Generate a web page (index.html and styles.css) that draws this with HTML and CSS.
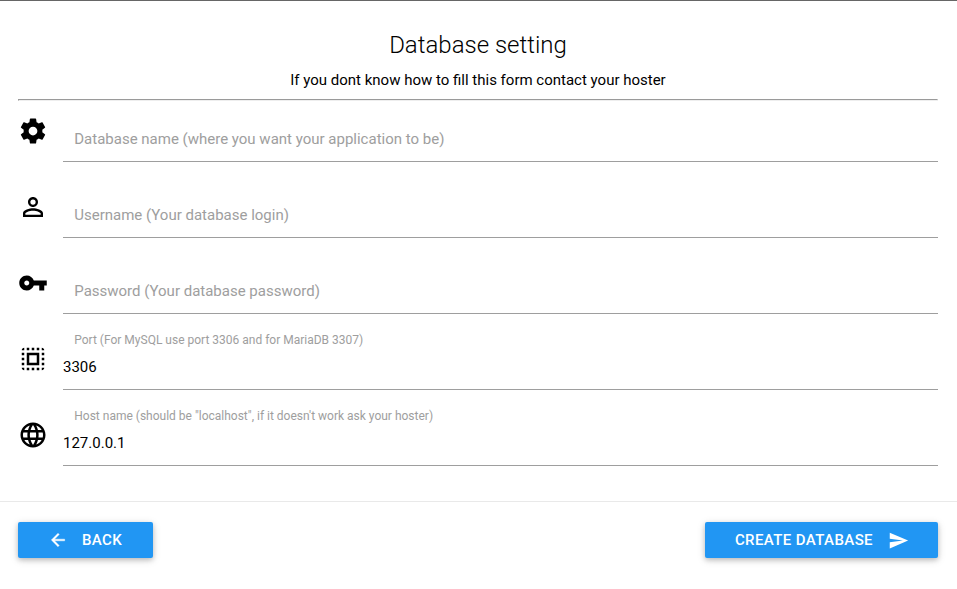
FILE: index.html
```html
<!DOCTYPE html>
<html lang="en">
<head>
  <meta charset="UTF-8">
  <meta name="viewport" content="width=device-width, initial-scale=1.0">
  <title>Database setting</title>
  <link rel="stylesheet" href="styles.css">
</head>
<body>
  <form class="setup">
    <div class="content">
      <header class="heading">
        <h1>Database setting</h1>
        <p>If you dont know how to fill this form contact your hoster</p>
      </header>
      <hr>

      <div class="input-field">
        <svg class="prefix" viewBox="0 0 24 24"><path d="M19.43 12.98c.04-.32.07-.64.07-.98s-.03-.66-.07-.98l2.11-1.65c.19-.15.24-.42.12-.64l-2-3.46c-.12-.22-.39-.3-.61-.22l-2.49 1c-.52-.4-1.08-.73-1.69-.98l-.38-2.65C14.46 2.18 14.25 2 14 2h-4c-.25 0-.46.18-.49.42l-.38 2.65c-.61.25-1.17.59-1.69.98l-2.49-1c-.23-.09-.49 0-.61.22l-2 3.46c-.13.22-.07.49.12.64l2.11 1.65c-.04.32-.07.65-.07.98s.03.66.07.98l-2.11 1.65c-.19.15-.24.42-.12.64l2 3.46c.12.22.39.3.61.22l2.49-1c.52.4 1.08.73 1.69.98l.38 2.65c.03.24.24.42.49.42h4c.25 0 .46-.18.49-.42l.38-2.65c.61-.25 1.17-.59 1.69-.98l2.49 1c.23.09.49 0 .61-.22l2-3.46c.12-.22.07-.49-.12-.64l-2.11-1.65zM12 15.5c-1.93 0-3.5-1.57-3.5-3.5s1.57-3.5 3.5-3.5 3.5 1.57 3.5 3.5-1.57 3.5-3.5 3.5z"/></svg>
        <div class="control">
          <label for="db-name">Database name (where you want your application to be)</label>
          <input id="db-name" type="text">
        </div>
      </div>

      <div class="input-field">
        <svg class="prefix" viewBox="0 0 24 24"><path d="M12 5.9a2.1 2.1 0 1 1 0 4.2 2.1 2.1 0 0 1 0-4.2m0 9c2.97 0 6.1 1.46 6.1 2.1v1.1H5.9V17c0-.64 3.13-2.1 6.1-2.1M12 4C9.79 4 8 5.79 8 8s1.79 4 4 4 4-1.79 4-4-1.79-4-4-4zm0 9c-2.67 0-8 1.34-8 4v3h16v-3c0-2.66-5.33-4-8-4z"/></svg>
        <div class="control">
          <label for="db-user">Username (Your database login)</label>
          <input id="db-user" type="text">
        </div>
      </div>

      <div class="input-field">
        <svg class="prefix" viewBox="0 0 24 24"><path d="M12.65 10C11.83 7.67 9.61 6 7 6c-3.31 0-6 2.69-6 6s2.69 6 6 6c2.61 0 4.83-1.67 5.65-4H17v4h4v-4h2v-4H12.65zM7 14c-1.1 0-2-.9-2-2s.9-2 2-2 2 .9 2 2-.9 2-2 2z"/></svg>
        <div class="control">
          <label for="db-password">Password (Your database password)</label>
          <input id="db-password" type="password">
        </div>
      </div>

      <div class="input-field">
        <svg class="prefix" viewBox="0 0 24 24"><path d="M3 5h2V3c-1.1 0-2 .9-2 2zm0 8h2v-2H3v2zm4 8h2v-2H7v2zM3 9h2V7H3v2zm10-6h-2v2h2V3zm6 0v2h2c0-1.1-.9-2-2-2zM5 21v-2H3c0 1.1.9 2 2 2zm-2-4h2v-2H3v2zM9 3H7v2h2V3zm2 18h2v-2h-2v2zm8-8h2v-2h-2v2zm0 8c1.1 0 2-.9 2-2h-2v2zm0-12h2V7h-2v2zm0 8h2v-2h-2v2zm-4 4h2v-2h-2v2zm0-16h2V3h-2v2zM7 17h10V7H7v10zm2-8h6v6H9V9z"/></svg>
        <div class="control">
          <label class="active" for="db-port">Port (For MySQL use port 3306 and for MariaDB 3307)</label>
          <input id="db-port" type="text" value="3306">
        </div>
      </div>

      <div class="input-field">
        <svg class="prefix" viewBox="0 0 24 24"><path d="M11.99 2C6.47 2 2 6.48 2 12s4.47 10 9.99 10C17.52 22 22 17.52 22 12S17.52 2 11.99 2zm6.93 6h-2.95c-.32-1.25-.78-2.45-1.38-3.56 1.84.63 3.37 1.91 4.33 3.56zM12 4.04c.83 1.2 1.48 2.53 1.91 3.96h-3.82c.43-1.43 1.08-2.76 1.91-3.96zM4.26 14C4.1 13.36 4 12.69 4 12s.1-1.36.26-2h3.38c-.08.66-.14 1.32-.14 2s.06 1.34.14 2H4.26zm.82 2h2.95c.32 1.25.78 2.45 1.38 3.56-1.84-.63-3.37-1.9-4.33-3.56zm2.95-8H5.08c.96-1.66 2.49-2.93 4.33-3.56C8.81 5.55 8.35 6.75 8.03 8zM12 19.96c-.83-1.2-1.48-2.53-1.91-3.96h3.82c-.43 1.43-1.08 2.76-1.91 3.96zM14.34 14H9.66c-.09-.66-.16-1.32-.16-2s.07-1.35.16-2h4.68c.09.65.16 1.32.16 2s-.07 1.34-.16 2zm.25 5.56c.6-1.11 1.06-2.31 1.38-3.56h2.95c-.96 1.65-2.49 2.93-4.33 3.56zM16.36 14c.08-.66.14-1.32.14-2s-.06-1.34-.14-2h3.38c.16.64.26 1.31.26 2s-.1 1.36-.26 2h-3.38z"/></svg>
        <div class="control">
          <label class="active" for="db-host">Host name (should be "localhost", if it doesn't work ask your hoster)</label>
          <input id="db-host" type="text" value="127.0.0.1">
        </div>
      </div>
    </div>

    <footer class="actions">
      <button class="btn btn-back" type="button">
        <svg viewBox="0 0 24 24"><path d="M20 11H7.83l5.59-5.59L12 4l-8 8 8 8 1.41-1.41L7.83 13H20v-2z"/></svg>
        Back
      </button>
      <button class="btn btn-create" type="button">
        Create database
        <svg viewBox="0 0 24 24"><path d="M2.01 21L23 12 2.01 3 2 10l15 2-15 2z"/></svg>
      </button>
    </footer>
  </form>
</body>
</html>
```
FILE: styles.css
```css
* {
  box-sizing: border-box;
  margin: 0;
  padding: 0;
}

body {
  min-height: 100vh;
  background-color: #fff;
  color: rgba(0, 0, 0, 0.87);
  font-family: Roboto, sans-serif;
  font-size: 15px;
}

.setup {
  border-top: 1px solid #666;
}

.content {
  height: 500px;
  padding: 29px 19px 0 18px;
}

.heading {
  height: 69px;
  color: #000;
  text-align: center;
}

.heading h1 {
  font-size: 24px;
  font-weight: 300;
  line-height: 30px;
}

.heading p {
  margin-top: 9px;
  line-height: 22px;
}

hr {
  margin-bottom: -1px;
  border: 1px solid;
  border-color: #9a9a9a #eee #eee #9a9a9a;
}

.input-field {
  display: flex;
  height: 76px;
}

.prefix {
  width: 30px;
  height: 30px;
  margin: 16px 15px 0 0;
  fill: #000;
}

.control {
  display: flex;
  flex: 1;
  flex-direction: column;
  height: 62px;
  border-bottom: 1px solid #9e9e9e;
}

.control label {
  height: 38px;
  padding: 28px 0 0 11.25px;
  color: #9e9e9e;
  font-size: 15px;
  line-height: 22px;
}

.control label.active {
  height: 27px;
  padding-top: 1px;
  font-size: 12px;
}

.control input {
  height: 24px;
  border: none;
  outline: none;
  background: transparent;
  color: #000;
  font-family: inherit;
  font-size: 15px;
}

.actions {
  display: flex;
  align-items: flex-start;
  justify-content: space-between;
  padding: 20px 19px 20px 18px;
  border-top: 1px solid #e9e9e9;
}

.btn {
  display: flex;
  align-items: center;
  height: 36px;
  padding: 0 30px;
  border: none;
  border-radius: 2px;
  background-color: #2196f3;
  box-shadow: 0 2px 5px 0 rgba(0, 0, 0, 0.2), 0 2px 10px 0 rgba(0, 0, 0, 0.12);
  color: #fff;
  cursor: pointer;
  font-family: inherit;
  font-size: 15px;
  font-weight: 500;
  letter-spacing: 0.4px;
  text-transform: uppercase;
}

.btn svg {
  fill: #fff;
}

.btn-back {
  width: 135px;
}

.btn-back svg {
  width: 20px;
  height: 20px;
  margin-right: 14px;
  stroke: #fff;
  stroke-width: 0.5;
}

.btn-create {
  padding-right: 29px;
}

.btn-create svg {
  width: 21px;
  height: 21px;
  margin-left: 15px;
}
```
